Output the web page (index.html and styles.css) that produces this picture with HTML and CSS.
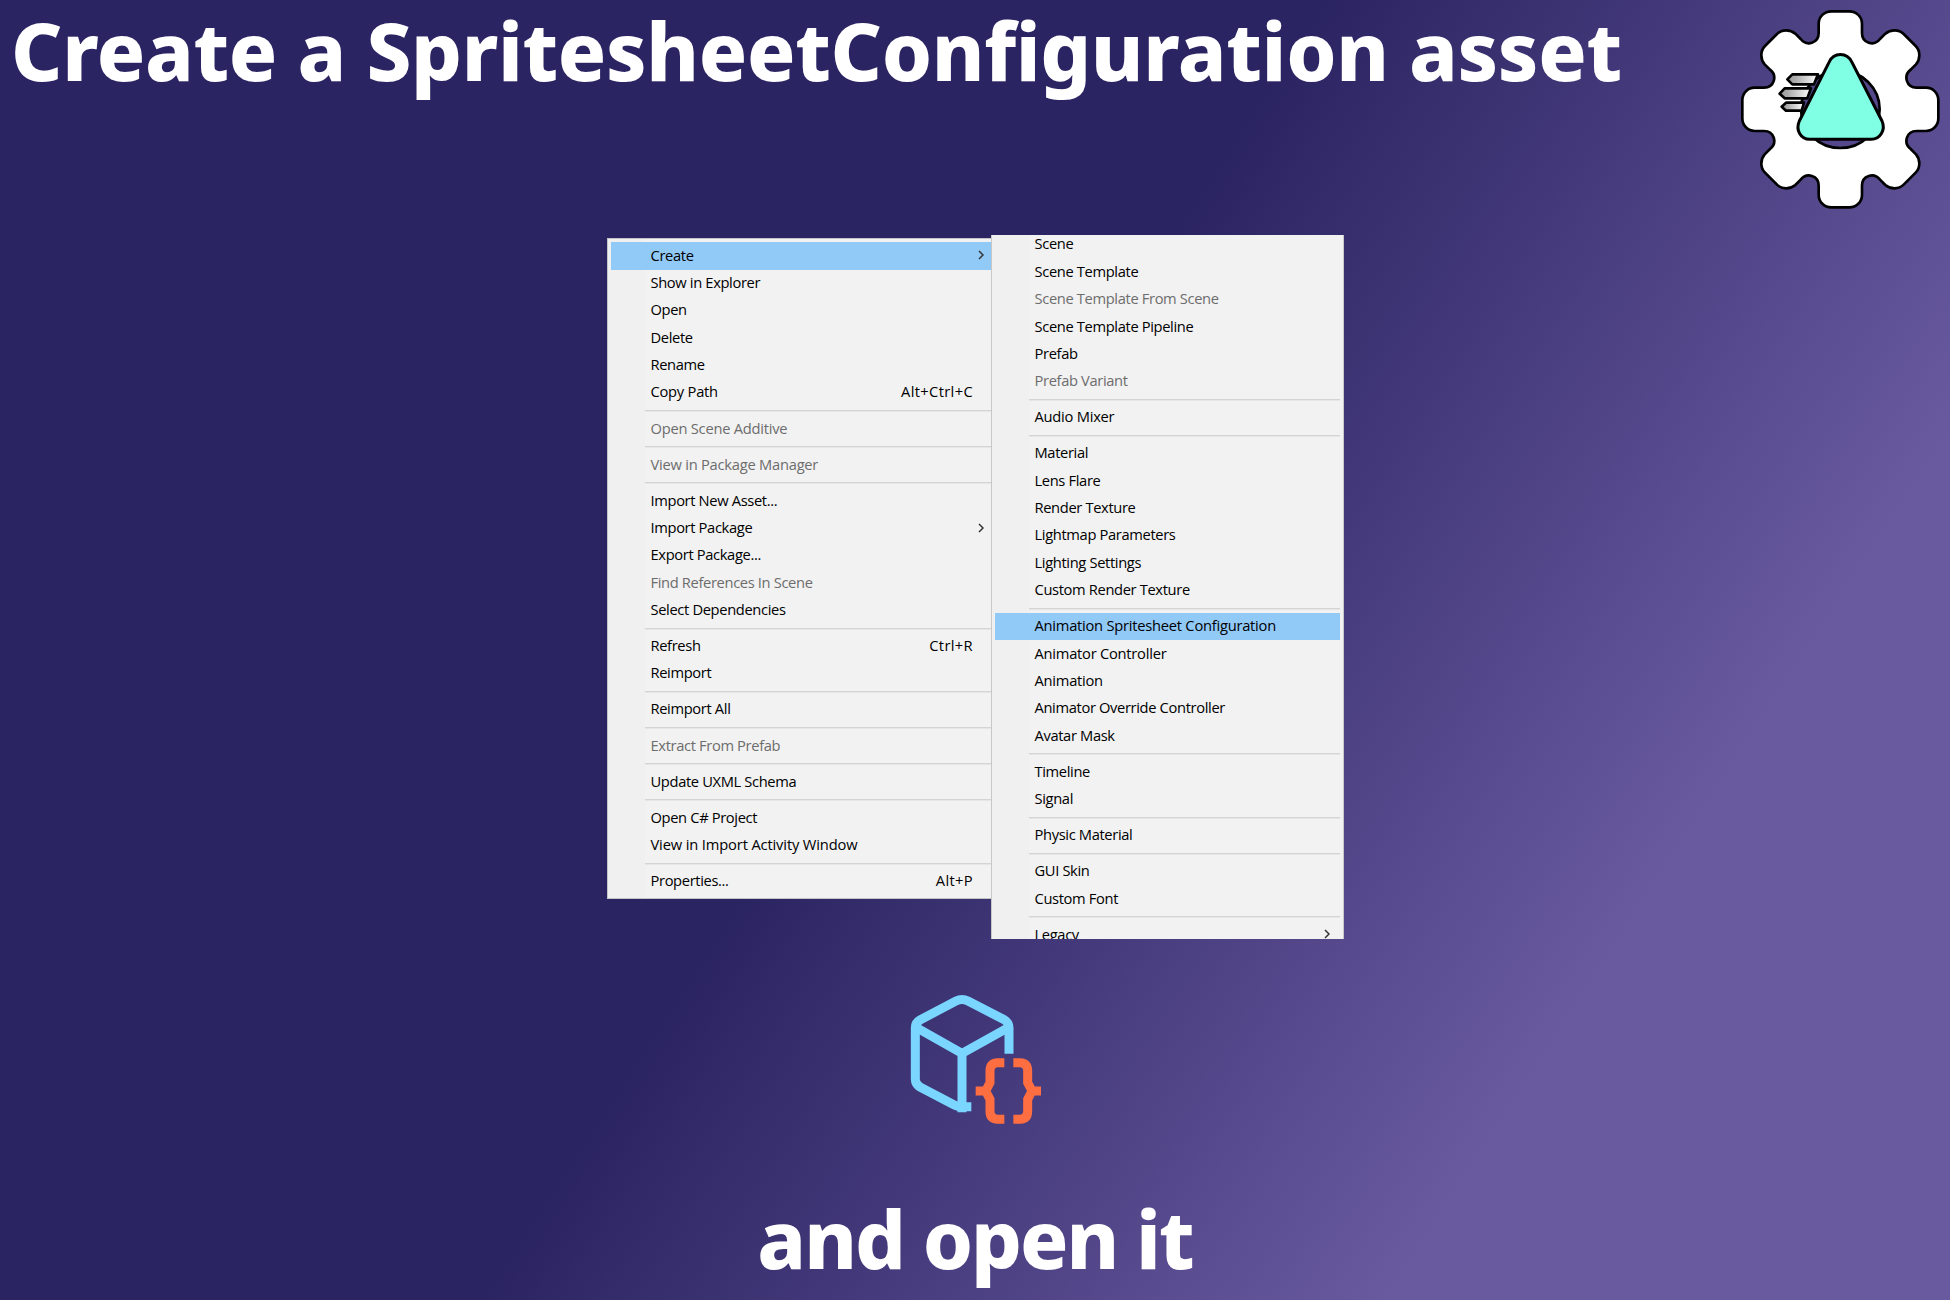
FILE: index.html
```html
<!DOCTYPE html>
<html lang="en">
<head>
<meta charset="utf-8">
<title>Create a SpritesheetConfiguration asset</title>
<link rel="stylesheet" href="styles.css">
</head>
<body>
<main class="slide">
<header class="header">
<h1 class="title">Create a SpritesheetConfiguration asset</h1>
<svg class="logo" viewBox="0 0 660 660" aria-hidden="true">
<defs><linearGradient id="trail"><stop offset="0" stop-color="#999"/><stop offset=".25" stop-color="#aaa"/><stop offset="1" stop-color="#fff"/></linearGradient></defs>
<g stroke="#000" stroke-width="8" stroke-linejoin="round">
<path transform="translate(331 328)" fill="#fff" fill-rule="evenodd" d="M-27-294H27C48-294 65-278 65-257V-229C65-198 101-188 119-211L135-227C150-240 175-241 190-226L226-190C241-175 240-150 227-135L211-119C188-101 198-65 229-65H257C278-65 294-48 294-27V27C294 48 278 65 257 65H229C198 65 188 101 211 119L227 135C240 150 241 175 226 190L190 226C175 241 150 240 135 227L119 211C101 188 65 198 65 229V257C65 278 48 294 27 294H-27C-48 294-65 278-65 257V229C-65 198-101 188-119 211L-135 227C-150 240-175 241-190 226L-226 190C-241 175-240 150-227 135L-211 119C-188 101-198 65-229 65H-257C-278 65-294 48-294 27V-27C-294-48-278-65-257-65H-229C-198-65-188-101-211-119L-227-135C-240-150-241-175-226-190L-190-226C-175-241-150-240-135-227L-119-211C-101-188-65-198-65-229V-257C-65-278-48-294-27-294ZM118 0A118 116 0 1 0-118 0A118 116 0 1 0 118 0Z"/>
<g fill="url(#trail)"><path d="M172 238L187 223H264L252 253H187Z"/><path d="M149 281L164 265H243L232 295H164Z"/><path d="M155 320L168 308H222L215 332H168Z"/></g>
<path fill="#80ffe4" stroke-width="9" d="M297 187C311 156 351 156 366 187L456 363C468 390 450 418 424 418H239C212 418 196 390 208 363Z"/>
</g>
</svg>
</header>
<section class="menus">
<ul class="menu menu-main">
<li class="item active">Create<svg class="chevron" viewBox="0 0 6 10"><path d="M1 1L5 5L1 9"/></svg></li>
<li class="item">Show in Explorer</li>
<li class="item">Open</li>
<li class="item">Delete</li>
<li class="item">Rename</li>
<li class="item loose">Copy Path<span class="keys">Alt+Ctrl+C</span></li>
<li class="rule"></li>
<li class="item off loose">Open Scene Additive</li>
<li class="rule"></li>
<li class="item off loose">View in Package Manager</li>
<li class="rule"></li>
<li class="item">Import New Asset...</li>
<li class="item">Import Package<svg class="chevron" viewBox="0 0 6 10"><path d="M1 1L5 5L1 9"/></svg></li>
<li class="item">Export Package...</li>
<li class="item off">Find References In Scene</li>
<li class="item">Select Dependencies</li>
<li class="rule"></li>
<li class="item">Refresh<span class="keys">Ctrl+R</span></li>
<li class="item">Reimport</li>
<li class="rule"></li>
<li class="item">Reimport All</li>
<li class="rule"></li>
<li class="item off">Extract From Prefab</li>
<li class="rule"></li>
<li class="item">Update UXML Schema</li>
<li class="rule"></li>
<li class="item">Open C# Project</li>
<li class="item looser">View in Import Activity Window</li>
<li class="rule"></li>
<li class="item">Properties...<span class="keys">Alt+P</span></li>
</ul>
<ul class="menu menu-sub">
<li class="item">Scene</li>
<li class="item">Scene Template</li>
<li class="item off">Scene Template From Scene</li>
<li class="item">Scene Template Pipeline</li>
<li class="item">Prefab</li>
<li class="item off">Prefab Variant</li>
<li class="rule"></li>
<li class="item loose">Audio Mixer</li>
<li class="rule"></li>
<li class="item">Material</li>
<li class="item">Lens Flare</li>
<li class="item">Render Texture</li>
<li class="item">Lightmap Parameters</li>
<li class="item">Lighting Settings</li>
<li class="item">Custom Render Texture</li>
<li class="rule"></li>
<li class="item active loose">Animation Spritesheet Configuration</li>
<li class="item loose">Animator Controller</li>
<li class="item loose">Animation</li>
<li class="item">Animator Override Controller</li>
<li class="item">Avatar Mask</li>
<li class="rule"></li>
<li class="item">Timeline</li>
<li class="item">Signal</li>
<li class="rule"></li>
<li class="item">Physic Material</li>
<li class="rule"></li>
<li class="item">GUI Skin</li>
<li class="item">Custom Font</li>
<li class="rule"></li>
<li class="item">Legacy<svg class="chevron" viewBox="0 0 6 10"><path d="M1 1L5 5L1 9"/></svg></li>
</ul>
</section>
<svg class="asset" viewBox="0 0 510 480" aria-hidden="true">
<g fill="none" stroke-width="27">
<g stroke="#7ad5ff"><path d="M357 221V143Q357 128 344 120L234 63Q216 54 198 63L90 120Q76 128 76 143V298Q76 313 90 321L193 375Q203 380 216 380H244"/><path d="M78 142L216 220L356 142M216 212V397"/></g>
<g stroke="#ff6e40"><path d="M343 248H323Q300 249 300 272V308L287 333L300 358V394Q300 417 323 418H343M257 333H294"/><path d="M370 248H390Q413 249 413 272V308L426 333L413 358V394Q413 417 390 418H370M453 333H419"/></g>
</g>
</svg>
<p class="title closing">and open it</p>
</main>
</body>
</html>
```
FILE: styles.css
```css
* { box-sizing: border-box; }
body { margin: 0; }
.slide {
  width: 1950px;
  height: 1300px;
  display: flex;
  flex-direction: column;
  overflow: hidden;
  background: linear-gradient(123deg, #2b2462 47.5%, #695aa0 80%);
}
.header { display: flex; justify-content: space-between; height: 235px; }
.title {
  margin: 0;
  color: #fff;
  font: 800 80px/110px "Noto Sans", sans-serif;
  letter-spacing: -0.35px;
  font-variant-ligatures: none;
  white-space: nowrap;
}
.header .title { padding: 0 0 0 11px; margin-top: -5px; }
.logo { width: 220px; height: 220px; flex: none; }
.menus { display: flex; align-items: flex-start; height: 745px; padding-left: 607px; }
.menu {
  margin: 0;
  padding: 0;
  list-style: none;
  font: 14.7px/27.36px "Open Sans", sans-serif;
  letter-spacing: -0.35px;
  color: #000;
}
.menu-main {
  width: 384px;
  height: 661px;
  margin-top: 3px;
  padding: 3.3px 0 0 3px;
  border: 1px solid #c4c4c8;
  border-right: 0;
  background: linear-gradient(90deg, #f0f0f0 37px, #f2f2f2 37px);
}
.menu-sub {
  width: 353px;
  height: 704px;
  padding: 0 3px;
  overflow: hidden;
  border: solid #c8c8c8;
  border-width: 0 1px;
  background: linear-gradient(90deg, #f0f0f0 37px, #f2f2f2 37px);
}
.menu-sub .item:first-child { margin-top: -3.9px; }
.item {
  display: flex;
  align-items: center;
  height: 27.36px;
  padding: 0 7px 1.3px 39.5px;
  white-space: nowrap;
}
.loose { letter-spacing: -0.24px; }
.looser { letter-spacing: -0.14px; }
.active { background: #91c9f7; }
.off { color: #6d6d6d; }
.keys { margin-left: auto; padding-right: 11px; letter-spacing: 0.35px; }
.chevron { width: 6px; height: 10px; margin-left: auto; fill: none; stroke: #333; stroke-width: 1.5; }
.menu-sub .chevron { margin-right: 3px; }
.rule { height: 8.7px; padding-top: 3.6px; margin-left: 34px; }
.rule::before { content: ""; display: block; height: 1px; background: #d4d4d4; box-shadow: 0 1px #e6e6e6; }
.asset { width: 170px; height: 160px; margin-left: 890px; flex: none; }
.closing { text-align: center; padding-top: 43px; letter-spacing: -2px; }
```
